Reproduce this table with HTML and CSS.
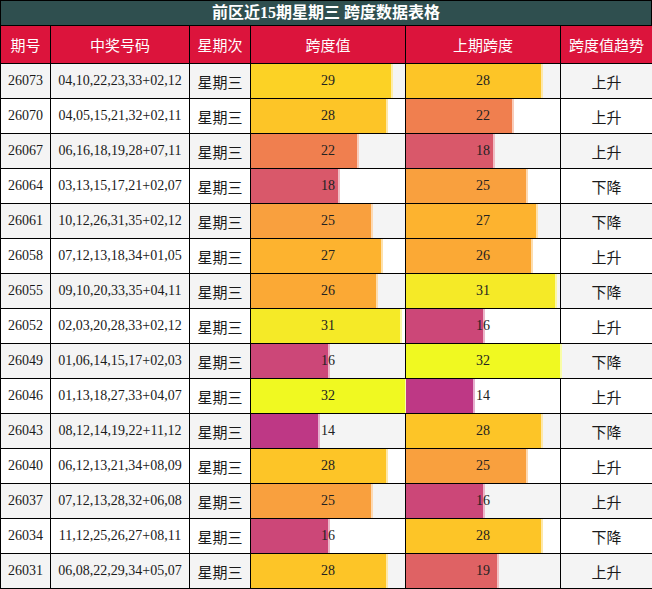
FILE: index.html
```html
<!DOCTYPE html>
<html lang="zh">
<head>
<meta charset="utf-8">
<title>前区近15期星期三 跨度数据表格</title>
<link rel="stylesheet" href="styles.css">
</head>
<body>
<div class="sheet">
  <div class="title">前区近15期星期三 跨度数据表格</div>
  <table class="grid">
    <colgroup>
      <col class="c-issue"><col class="c-nums"><col class="c-day"><col class="c-span"><col class="c-span"><col class="c-trend">
    </colgroup>
    <thead>
      <tr><th>期号</th><th>中奖号码</th><th>星期次</th><th>跨度值</th><th>上期跨度</th><th>跨度值趋势</th></tr>
    </thead>
    <tbody>
      <tr><td>26073</td><td>04,10,22,23,33+02,12</td><td class="cjk">星期三</td>
        <td><div class="meter"><div class="bar" style="width:90.625%;--c:#fcd225"></div><span class="val">29</span></div></td>
        <td><div class="meter"><div class="bar" style="width:87.5%;--c:#fdc527"></div><span class="val">28</span></div></td>
        <td class="cjk">上升</td></tr>
      <tr><td>26070</td><td>04,05,15,21,32+02,11</td><td class="cjk">星期三</td>
        <td><div class="meter"><div class="bar" style="width:87.5%;--c:#fdc527"></div><span class="val">28</span></div></td>
        <td><div class="meter"><div class="bar" style="width:68.75%;--c:#f07f4f"></div><span class="val">22</span></div></td>
        <td class="cjk">上升</td></tr>
      <tr><td>26067</td><td>06,16,18,19,28+07,11</td><td class="cjk">星期三</td>
        <td><div class="meter"><div class="bar" style="width:68.75%;--c:#f07f4f"></div><span class="val">22</span></div></td>
        <td><div class="meter"><div class="bar" style="width:56.25%;--c:#d9586a"></div><span class="val">18</span></div></td>
        <td class="cjk">上升</td></tr>
      <tr><td>26064</td><td>03,13,15,17,21+02,07</td><td class="cjk">星期三</td>
        <td><div class="meter"><div class="bar" style="width:56.25%;--c:#d9586a"></div><span class="val">18</span></div></td>
        <td><div class="meter"><div class="bar" style="width:78.125%;--c:#f9a03e"></div><span class="val">25</span></div></td>
        <td class="cjk">下降</td></tr>
      <tr><td>26061</td><td>10,12,26,31,35+02,12</td><td class="cjk">星期三</td>
        <td><div class="meter"><div class="bar" style="width:78.125%;--c:#f9a03e"></div><span class="val">25</span></div></td>
        <td><div class="meter"><div class="bar" style="width:84.375%;--c:#fdb32f"></div><span class="val">27</span></div></td>
        <td class="cjk">下降</td></tr>
      <tr><td>26058</td><td>07,12,13,18,34+01,05</td><td class="cjk">星期三</td>
        <td><div class="meter"><div class="bar" style="width:84.375%;--c:#fdb32f"></div><span class="val">27</span></div></td>
        <td><div class="meter"><div class="bar" style="width:81.25%;--c:#fba935"></div><span class="val">26</span></div></td>
        <td class="cjk">上升</td></tr>
      <tr><td>26055</td><td>09,10,20,33,35+04,11</td><td class="cjk">星期三</td>
        <td><div class="meter"><div class="bar" style="width:81.25%;--c:#fba935"></div><span class="val">26</span></div></td>
        <td><div class="meter"><div class="bar" style="width:96.875%;--c:#f5ea27"></div><span class="val">31</span></div></td>
        <td class="cjk">下降</td></tr>
      <tr><td>26052</td><td>02,03,20,28,33+02,12</td><td class="cjk">星期三</td>
        <td><div class="meter"><div class="bar" style="width:96.875%;--c:#f5ea27"></div><span class="val">31</span></div></td>
        <td><div class="meter"><div class="bar" style="width:50%;--c:#cc4778"></div><span class="val">16</span></div></td>
        <td class="cjk">上升</td></tr>
      <tr><td>26049</td><td>01,06,14,15,17+02,03</td><td class="cjk">星期三</td>
        <td><div class="meter"><div class="bar" style="width:50%;--c:#cc4778"></div><span class="val">16</span></div></td>
        <td><div class="meter"><div class="bar" style="width:100%;--c:#f0f921"></div><span class="val">32</span></div></td>
        <td class="cjk">下降</td></tr>
      <tr><td>26046</td><td>01,13,18,27,33+04,07</td><td class="cjk">星期三</td>
        <td><div class="meter"><div class="bar" style="width:100%;--c:#f0f921"></div><span class="val">32</span></div></td>
        <td><div class="meter"><div class="bar" style="width:43.75%;--c:#be3885"></div><span class="val">14</span></div></td>
        <td class="cjk">上升</td></tr>
      <tr><td>26043</td><td>08,12,14,19,22+11,12</td><td class="cjk">星期三</td>
        <td><div class="meter"><div class="bar" style="width:43.75%;--c:#be3885"></div><span class="val">14</span></div></td>
        <td><div class="meter"><div class="bar" style="width:87.5%;--c:#fdc527"></div><span class="val">28</span></div></td>
        <td class="cjk">下降</td></tr>
      <tr><td>26040</td><td>06,12,13,21,34+08,09</td><td class="cjk">星期三</td>
        <td><div class="meter"><div class="bar" style="width:87.5%;--c:#fdc527"></div><span class="val">28</span></div></td>
        <td><div class="meter"><div class="bar" style="width:78.125%;--c:#f9a03e"></div><span class="val">25</span></div></td>
        <td class="cjk">上升</td></tr>
      <tr><td>26037</td><td>07,12,13,28,32+06,08</td><td class="cjk">星期三</td>
        <td><div class="meter"><div class="bar" style="width:78.125%;--c:#f9a03e"></div><span class="val">25</span></div></td>
        <td><div class="meter"><div class="bar" style="width:50%;--c:#cc4778"></div><span class="val">16</span></div></td>
        <td class="cjk">上升</td></tr>
      <tr><td>26034</td><td>11,12,25,26,27+08,11</td><td class="cjk">星期三</td>
        <td><div class="meter"><div class="bar" style="width:50%;--c:#cc4778"></div><span class="val">16</span></div></td>
        <td><div class="meter"><div class="bar" style="width:87.5%;--c:#fdc527"></div><span class="val">28</span></div></td>
        <td class="cjk">下降</td></tr>
      <tr><td>26031</td><td>06,08,22,29,34+05,07</td><td class="cjk">星期三</td>
        <td><div class="meter"><div class="bar" style="width:87.5%;--c:#fdc527"></div><span class="val">28</span></div></td>
        <td><div class="meter"><div class="bar" style="width:59.375%;--c:#df6264"></div><span class="val">19</span></div></td>
        <td class="cjk">上升</td></tr>
    </tbody>
  </table>
</div>
</body>
</html>
```
FILE: styles.css
```css
html, body {
  margin: 0;
  padding: 0;
  background: #ffffff;
}

.sheet {
  width: 652px;
  font-family: "Liberation Serif", "Noto Sans CJK SC", serif;
  color: #1a1a1a;
}

.title {
  height: 24px;
  line-height: 24px;
  border: 1px solid #000;
  border-bottom: none;
  background: #2f4f4f;
  color: #ffffff;
  font-weight: bold;
  font-size: 16px;
  text-align: center;
}

.grid {
  width: 652px;
  border-collapse: collapse;
  table-layout: fixed;
}

.c-issue { width: 50px; }
.c-nums { width: 139px; }
.c-day { width: 61px; }
.c-span { width: 155px; }
.c-trend { width: 92px; }

.grid th,
.grid td {
  border: 1px solid #000;
  padding: 0;
  text-align: center;
  vertical-align: middle;
  white-space: nowrap;
}

.grid th {
  height: 37px;
  background: #dc143c;
  color: #ffffff;
  font-family: "Noto Sans CJK SC", sans-serif;
  font-weight: normal;
  font-size: 15px;
}

.grid td {
  height: 34px;
  font-size: 14px;
}

.grid tbody tr:nth-child(odd) td {
  background: #f4f4f4;
}

.grid tbody tr:nth-child(even) td {
  background: #ffffff;
}

.grid td.cjk {
  font-family: "Noto Sans CJK SC", sans-serif;
  font-size: 15px;
}

.meter {
  display: grid;
  height: 34px;
  align-items: center;
}

.bar {
  grid-area: 1 / 1;
  height: 100%;
  background: var(--c);
  box-shadow: 2px 0 0 color-mix(in srgb, var(--c) 40%, white);
}

.val {
  grid-area: 1 / 1;
  justify-self: center;
  position: relative;
  color: #222;
}
```
